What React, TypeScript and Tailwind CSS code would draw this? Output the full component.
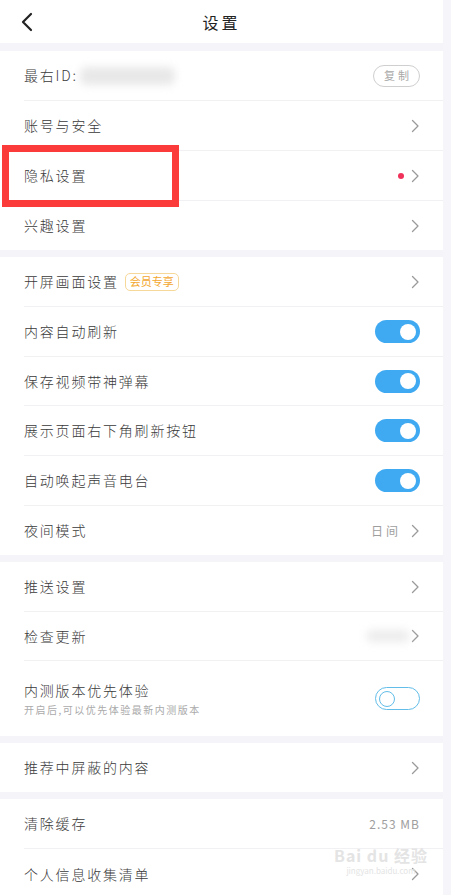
import React from 'react';

const font = { fontFamily: '"Noto Sans CJK SC", "Noto Sans", sans-serif' };

const Chevron: React.FC = () => (
  <svg width="9" height="14" viewBox="0 0 9 14" fill="none" className="shrink-0">
    <path d="M1.5 1.5L7 7l-5.5 5.5" stroke="#9a9a9a" strokeWidth="1.3" strokeLinecap="round" strokeLinejoin="round" />
  </svg>
);

const Toggle: React.FC<{ on?: boolean }> = ({ on = true }) =>
  on ? (
    <div className="w-[45px] h-[23px] rounded-full bg-[#3fa9f1] flex items-center justify-end pr-[4px]">
      <div className="w-[16px] h-[16px] rounded-full bg-white" />
    </div>
  ) : (
    <div className="w-[45px] h-[23px] rounded-full border border-[#62bde8] flex items-center pl-[3px]">
      <div className="w-[16px] h-[16px] rounded-full border border-[#62bde8] bg-white" />
    </div>
  );

const Row: React.FC<{
  label: string;
  right?: React.ReactNode;
  last?: boolean;
  extra?: React.ReactNode;
  short?: boolean;
}> = ({ label, right, last, extra, short }) => (
  <div className={`${short ? 'h-[49px]' : 'h-[50px]'} pl-[24px] flex`}>
    <div className={`flex-1 flex items-center justify-between pr-[23px] ${last ? '' : 'border-b border-[#f1f1f4]'}`}>
      <div className="flex items-center">
        <span className="text-[14px] text-[#3a3a3a] font-light tracking-[1.8px]">{label}</span>
        {extra}
      </div>
      <div className="flex items-center">{right}</div>
    </div>
  </div>
);

const Gap: React.FC<{ h?: string }> = ({ h = 'h-[7px]' }) => <div className={`${h} bg-[#f5f5f9]`} />;

export default function App() {
  return (
    <div className="w-[451px] h-[895px] overflow-hidden bg-[#f6f6fa] flex items-start relative" style={font}>
      <div className="w-[443px] shrink-0">
        {/* header */}
        <div className="h-[43px] bg-white flex items-center relative">
          <div className="pl-[20px]">
            <svg width="14" height="20" viewBox="0 0 14 20" fill="none">
              <path d="M11 2L3 10l8 8" stroke="#222" strokeWidth="2.2" strokeLinecap="round" strokeLinejoin="round" />
            </svg>
          </div>
          <div className="absolute left-0 right-0 text-center text-[16px] text-[#222] tracking-[3px] pointer-events-none">
            设置
          </div>
        </div>
        <Gap h="h-[8px]" />

        <div className="bg-white">
          <Row
            label="最右ID:"
            extra={<div className="ml-[2px] w-[95px] h-[18px] rounded-md bg-[#e8e8e8] blur-[4px]" />}
            right={
              <div className="h-[22px] w-[47px] rounded-full border border-[#cfcfcf] flex items-center justify-center text-[11px] text-[#a8a8a8] tracking-[3px] pl-[3px]">
                复制
              </div>
            }
          />
          <Row label="账号与安全" right={<Chevron />} />
          <Row
            label="隐私设置"
            right={
              <>
                <div className="w-[6px] h-[6px] rounded-full bg-[#f0325a] mr-[7px]" />
                <Chevron />
              </>
            }
          />
          <Row label="兴趣设置" right={<Chevron />} last short />
        </div>
        <Gap />

        <div className="bg-white">
          <Row
            label="开屏画面设置"
            extra={
              <div className="ml-[6px] h-[18px] px-[4px] rounded-[5px] border border-[#f6d89a] text-[11px] text-[#f3a72e] flex items-center">
                会员专享
              </div>
            }
            right={<Chevron />}
          />
          <Row label="内容自动刷新" right={<Toggle />} />
          <Row label="保存视频带神弹幕" right={<Toggle />} short />
          <Row label="展示页面右下角刷新按钮" right={<Toggle />} />
          <Row label="自动唤起声音电台" right={<Toggle />} />
          <Row
            label="夜间模式"
            right={
              <>
                <span className="text-[12px] text-[#9e9e9e] tracking-[3px] mr-[10px]">日间</span>
                <Chevron />
              </>
            }
            last
            short
          />
        </div>
        <Gap />

        <div className="bg-white">
          <Row label="推送设置" right={<Chevron />} />
          <Row
            label="检查更新"
            short
            right={
              <>
                <div className="w-[42px] h-[12px] rounded bg-[#ececec] blur-[4px] mr-[2px]" />
                <Chevron />
              </>
            }
          />
          <div className="h-[75px] pl-[24px] pr-[23px] flex items-center justify-between">
            <div className="flex flex-col">
              <span className="text-[14px] text-[#3a3a3a] font-light tracking-[1.8px] leading-[20px]">内测版本优先体验</span>
              <span className="text-[10px] text-[#aaa] tracking-[1.5px] leading-[16px] mt-[2px]">
                开启后,可以优先体验最新内测版本
              </span>
            </div>
            <Toggle on={false} />
          </div>
        </div>
        <Gap />

        <div className="bg-white">
          <Row label="推荐中屏蔽的内容" right={<Chevron />} last short />
        </div>
        <Gap />

        <div className="bg-white">
          <Row label="清除缓存" right={<span className="text-[12px] text-[#9e9e9e] tracking-[1px]">2.53 MB</span>} />
          <Row label="个人信息收集清单" right={<Chevron />} last />
        </div>
      </div>

      {/* red highlight annotation */}
      <div className="absolute left-[2px] top-[145px] w-[177px] h-[62px] border-[7px] border-[#fb3a3a]" />

      {/* watermark */}
      <div className="absolute left-[334px] top-[846px] flex flex-col items-center text-[#e4e4e4] pointer-events-none">
        <span className="text-[16px] font-bold leading-[18px] tracking-[1px]">Bai du 经验</span>
        <span className="text-[8px] leading-[10px] mt-[2px]">jingyan.baidu.com</span>
      </div>
    </div>
  );
}
